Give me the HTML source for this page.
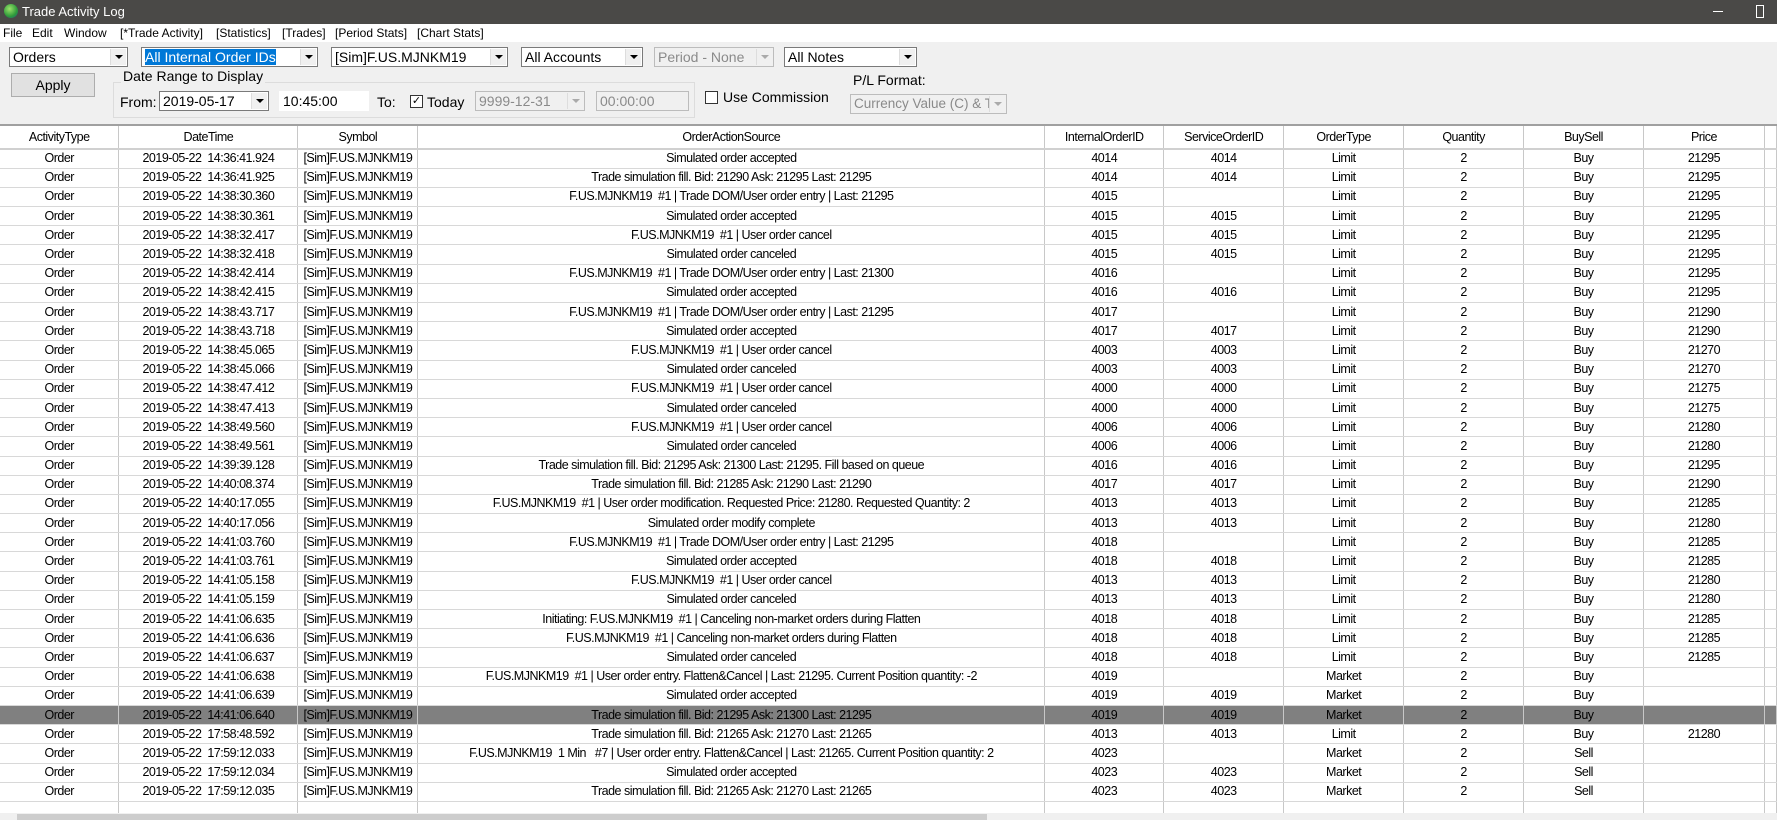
<!DOCTYPE html>
<html><head><meta charset="utf-8"><style>
*{box-sizing:border-box;margin:0;padding:0}
body{width:1777px;height:820px;overflow:hidden;background:#f0f0f0;font-family:"Liberation Sans",sans-serif;font-size:13px;color:#000;position:relative}
.a{position:absolute}
#title{left:0;top:0;width:1777px;height:24px;background:#4a4947;color:#fff;font-size:13px}
#menu{left:0;top:24px;width:1777px;height:18px;background:#fff;font-size:12px}
#menu span{position:absolute;top:2px}
.cb{position:absolute;height:20px;background:#fff;border:1px solid #7a7a7a;font-size:14px;line-height:18px;padding-left:3px;white-space:nowrap;overflow:hidden}
.cb .ar{position:absolute;right:1px;top:1px;width:16px;height:16px;background:#f0f0f0;border-left:1px solid #ddd}
.cb .ar:after{content:"";position:absolute;left:4px;top:6px;border-left:4px solid transparent;border-right:4px solid transparent;border-top:4px solid #000}
.cb.dis{background:#f0f0f0;border-color:#bcbcbc;color:#8a8a8a}
.cb.dis .ar:after{border-top-color:#aaa}
.lbl{position:absolute;font-size:14px}
.chk{position:absolute;width:13px;height:13px;border:1px solid #333;background:#fff;font-size:11px;line-height:11px;text-align:center}
#grid{left:0;top:124px;width:1777px;height:690px;background:#fff;border-top:2px solid #a0a0a0;overflow:hidden}
table{border-collapse:collapse;table-layout:fixed;font-family:"Liberation Sans",sans-serif;font-size:12.5px;letter-spacing:-0.5px}
td,th{border-right:1px solid #c8c8c8;border-bottom:1px solid #d8d8d8;text-align:center;white-space:nowrap;overflow:hidden;font-weight:normal;height:19.2px;line-height:17px;padding:0}
th{height:23px;border-bottom:2px solid #d0d0d0}
tr.sel td{background:#808080}
</style></head><body>
<div id="title" class="a">
<div class="a" style="left:4px;top:4px;width:14px;height:14px;border-radius:50%;background:radial-gradient(circle at 40% 35%,#9be36a,#2e9a3a 60%,#1a5e8a)"></div>
<span class="a" style="left:22px;top:4px">Trade Activity Log</span>
<div class="a" style="left:1713px;top:11px;width:10px;height:1px;background:#fff"></div>
<div class="a" style="left:1756px;top:5px;width:8px;height:13px;border:1px solid #fff"></div>
</div>
<div id="menu" class="a">
<span style="left:3px">File</span><span style="left:32px">Edit</span><span style="left:64px">Window</span><span style="left:120px">[*Trade Activity]</span><span style="left:216px">[Statistics]</span><span style="left:282px">[Trades]</span><span style="left:335px">[Period Stats]</span><span style="left:417px">[Chart Stats]</span>
</div>
<div class="cb" style="left:9px;top:47px;width:119px">Orders<div class="ar"></div></div>
<div class="cb" style="left:141px;top:47px;width:177px"><span style="background:#0078d7;color:#fff">All Internal Order IDs</span><div class="ar"></div></div>
<div class="cb" style="left:331px;top:47px;width:177px">[Sim]F.US.MJNKM19<div class="ar"></div></div>
<div class="cb" style="left:521px;top:47px;width:122px">All Accounts<div class="ar"></div></div>
<div class="cb dis" style="left:654px;top:47px;width:120px">Period - None<div class="ar"></div></div>
<div class="cb" style="left:784px;top:47px;width:133px">All Notes<div class="ar"></div></div>
<div class="a" style="left:11px;top:73px;width:84px;height:24px;border:1px solid #adadad;background:#e1e1e1;text-align:center;line-height:22px;font-size:14px">Apply</div>
<div class="a" style="left:113px;top:82px;width:582px;height:36px;border:1px solid #dcdcdc"></div>
<span class="lbl" style="left:121px;top:68px;background:#f0f0f0;padding:0 2px">Date Range to Display</span>
<span class="lbl" style="left:120px;top:94px">From:</span>
<div class="cb" style="left:159px;top:91px;width:110px">2019-05-17<div class="ar"></div></div>
<div class="cb" style="left:279px;top:91px;width:90px;border-color:#fff">10:45:00</div>
<span class="lbl" style="left:377px;top:94px">To:</span>
<div class="chk" style="left:410px;top:95px">✓</div>
<span class="lbl" style="left:427px;top:94px">Today</span>
<div class="cb dis" style="left:475px;top:91px;width:110px">9999-12-31<div class="ar"></div></div>
<div class="cb dis" style="left:596px;top:91px;width:93px">00:00:00</div>
<div class="chk" style="left:705px;top:91px"></div>
<span class="lbl" style="left:723px;top:89px">Use Commission</span>
<span class="lbl" style="left:853px;top:72px">P/L Format:</span>
<div class="cb dis" style="left:850px;top:94px;width:157px;font-size:13.5px">Currency Value (C) &amp; T<div class="ar"></div></div>
<div id="grid" class="a">
<table>
<colgroup><col style="width:119px"><col style="width:179px"><col style="width:120px"><col style="width:627px"><col style="width:119px"><col style="width:120px"><col style="width:120px"><col style="width:120px"><col style="width:120px"><col style="width:121px"><col style="width:12px"></colgroup>
<tr><th>ActivityType</th><th>DateTime</th><th>Symbol</th><th>OrderActionSource</th><th>InternalOrderID</th><th>ServiceOrderID</th><th>OrderType</th><th>Quantity</th><th>BuySell</th><th>Price</th><th></th></tr>
<tr><td>Order</td><td>2019-05-22&nbsp; 14:36:41.924</td><td>[Sim]F.US.MJNKM19</td><td>Simulated order accepted</td><td>4014</td><td>4014</td><td>Limit</td><td>2</td><td>Buy</td><td>21295</td><td></td></tr>
<tr><td>Order</td><td>2019-05-22&nbsp; 14:36:41.925</td><td>[Sim]F.US.MJNKM19</td><td>Trade simulation fill. Bid: 21290 Ask: 21295 Last: 21295</td><td>4014</td><td>4014</td><td>Limit</td><td>2</td><td>Buy</td><td>21295</td><td></td></tr>
<tr><td>Order</td><td>2019-05-22&nbsp; 14:38:30.360</td><td>[Sim]F.US.MJNKM19</td><td>F.US.MJNKM19&nbsp; #1 | Trade DOM/User order entry | Last: 21295</td><td>4015</td><td></td><td>Limit</td><td>2</td><td>Buy</td><td>21295</td><td></td></tr>
<tr><td>Order</td><td>2019-05-22&nbsp; 14:38:30.361</td><td>[Sim]F.US.MJNKM19</td><td>Simulated order accepted</td><td>4015</td><td>4015</td><td>Limit</td><td>2</td><td>Buy</td><td>21295</td><td></td></tr>
<tr><td>Order</td><td>2019-05-22&nbsp; 14:38:32.417</td><td>[Sim]F.US.MJNKM19</td><td>F.US.MJNKM19&nbsp; #1 | User order cancel</td><td>4015</td><td>4015</td><td>Limit</td><td>2</td><td>Buy</td><td>21295</td><td></td></tr>
<tr><td>Order</td><td>2019-05-22&nbsp; 14:38:32.418</td><td>[Sim]F.US.MJNKM19</td><td>Simulated order canceled</td><td>4015</td><td>4015</td><td>Limit</td><td>2</td><td>Buy</td><td>21295</td><td></td></tr>
<tr><td>Order</td><td>2019-05-22&nbsp; 14:38:42.414</td><td>[Sim]F.US.MJNKM19</td><td>F.US.MJNKM19&nbsp; #1 | Trade DOM/User order entry | Last: 21300</td><td>4016</td><td></td><td>Limit</td><td>2</td><td>Buy</td><td>21295</td><td></td></tr>
<tr><td>Order</td><td>2019-05-22&nbsp; 14:38:42.415</td><td>[Sim]F.US.MJNKM19</td><td>Simulated order accepted</td><td>4016</td><td>4016</td><td>Limit</td><td>2</td><td>Buy</td><td>21295</td><td></td></tr>
<tr><td>Order</td><td>2019-05-22&nbsp; 14:38:43.717</td><td>[Sim]F.US.MJNKM19</td><td>F.US.MJNKM19&nbsp; #1 | Trade DOM/User order entry | Last: 21295</td><td>4017</td><td></td><td>Limit</td><td>2</td><td>Buy</td><td>21290</td><td></td></tr>
<tr><td>Order</td><td>2019-05-22&nbsp; 14:38:43.718</td><td>[Sim]F.US.MJNKM19</td><td>Simulated order accepted</td><td>4017</td><td>4017</td><td>Limit</td><td>2</td><td>Buy</td><td>21290</td><td></td></tr>
<tr><td>Order</td><td>2019-05-22&nbsp; 14:38:45.065</td><td>[Sim]F.US.MJNKM19</td><td>F.US.MJNKM19&nbsp; #1 | User order cancel</td><td>4003</td><td>4003</td><td>Limit</td><td>2</td><td>Buy</td><td>21270</td><td></td></tr>
<tr><td>Order</td><td>2019-05-22&nbsp; 14:38:45.066</td><td>[Sim]F.US.MJNKM19</td><td>Simulated order canceled</td><td>4003</td><td>4003</td><td>Limit</td><td>2</td><td>Buy</td><td>21270</td><td></td></tr>
<tr><td>Order</td><td>2019-05-22&nbsp; 14:38:47.412</td><td>[Sim]F.US.MJNKM19</td><td>F.US.MJNKM19&nbsp; #1 | User order cancel</td><td>4000</td><td>4000</td><td>Limit</td><td>2</td><td>Buy</td><td>21275</td><td></td></tr>
<tr><td>Order</td><td>2019-05-22&nbsp; 14:38:47.413</td><td>[Sim]F.US.MJNKM19</td><td>Simulated order canceled</td><td>4000</td><td>4000</td><td>Limit</td><td>2</td><td>Buy</td><td>21275</td><td></td></tr>
<tr><td>Order</td><td>2019-05-22&nbsp; 14:38:49.560</td><td>[Sim]F.US.MJNKM19</td><td>F.US.MJNKM19&nbsp; #1 | User order cancel</td><td>4006</td><td>4006</td><td>Limit</td><td>2</td><td>Buy</td><td>21280</td><td></td></tr>
<tr><td>Order</td><td>2019-05-22&nbsp; 14:38:49.561</td><td>[Sim]F.US.MJNKM19</td><td>Simulated order canceled</td><td>4006</td><td>4006</td><td>Limit</td><td>2</td><td>Buy</td><td>21280</td><td></td></tr>
<tr><td>Order</td><td>2019-05-22&nbsp; 14:39:39.128</td><td>[Sim]F.US.MJNKM19</td><td>Trade simulation fill. Bid: 21295 Ask: 21300 Last: 21295. Fill based on queue</td><td>4016</td><td>4016</td><td>Limit</td><td>2</td><td>Buy</td><td>21295</td><td></td></tr>
<tr><td>Order</td><td>2019-05-22&nbsp; 14:40:08.374</td><td>[Sim]F.US.MJNKM19</td><td>Trade simulation fill. Bid: 21285 Ask: 21290 Last: 21290</td><td>4017</td><td>4017</td><td>Limit</td><td>2</td><td>Buy</td><td>21290</td><td></td></tr>
<tr><td>Order</td><td>2019-05-22&nbsp; 14:40:17.055</td><td>[Sim]F.US.MJNKM19</td><td>F.US.MJNKM19&nbsp; #1 | User order modification. Requested Price: 21280. Requested Quantity: 2</td><td>4013</td><td>4013</td><td>Limit</td><td>2</td><td>Buy</td><td>21285</td><td></td></tr>
<tr><td>Order</td><td>2019-05-22&nbsp; 14:40:17.056</td><td>[Sim]F.US.MJNKM19</td><td>Simulated order modify complete</td><td>4013</td><td>4013</td><td>Limit</td><td>2</td><td>Buy</td><td>21280</td><td></td></tr>
<tr><td>Order</td><td>2019-05-22&nbsp; 14:41:03.760</td><td>[Sim]F.US.MJNKM19</td><td>F.US.MJNKM19&nbsp; #1 | Trade DOM/User order entry | Last: 21295</td><td>4018</td><td></td><td>Limit</td><td>2</td><td>Buy</td><td>21285</td><td></td></tr>
<tr><td>Order</td><td>2019-05-22&nbsp; 14:41:03.761</td><td>[Sim]F.US.MJNKM19</td><td>Simulated order accepted</td><td>4018</td><td>4018</td><td>Limit</td><td>2</td><td>Buy</td><td>21285</td><td></td></tr>
<tr><td>Order</td><td>2019-05-22&nbsp; 14:41:05.158</td><td>[Sim]F.US.MJNKM19</td><td>F.US.MJNKM19&nbsp; #1 | User order cancel</td><td>4013</td><td>4013</td><td>Limit</td><td>2</td><td>Buy</td><td>21280</td><td></td></tr>
<tr><td>Order</td><td>2019-05-22&nbsp; 14:41:05.159</td><td>[Sim]F.US.MJNKM19</td><td>Simulated order canceled</td><td>4013</td><td>4013</td><td>Limit</td><td>2</td><td>Buy</td><td>21280</td><td></td></tr>
<tr><td>Order</td><td>2019-05-22&nbsp; 14:41:06.635</td><td>[Sim]F.US.MJNKM19</td><td>Initiating: F.US.MJNKM19&nbsp; #1 | Canceling non-market orders during Flatten</td><td>4018</td><td>4018</td><td>Limit</td><td>2</td><td>Buy</td><td>21285</td><td></td></tr>
<tr><td>Order</td><td>2019-05-22&nbsp; 14:41:06.636</td><td>[Sim]F.US.MJNKM19</td><td>F.US.MJNKM19&nbsp; #1 | Canceling non-market orders during Flatten</td><td>4018</td><td>4018</td><td>Limit</td><td>2</td><td>Buy</td><td>21285</td><td></td></tr>
<tr><td>Order</td><td>2019-05-22&nbsp; 14:41:06.637</td><td>[Sim]F.US.MJNKM19</td><td>Simulated order canceled</td><td>4018</td><td>4018</td><td>Limit</td><td>2</td><td>Buy</td><td>21285</td><td></td></tr>
<tr><td>Order</td><td>2019-05-22&nbsp; 14:41:06.638</td><td>[Sim]F.US.MJNKM19</td><td>F.US.MJNKM19&nbsp; #1 | User order entry. Flatten&amp;Cancel | Last: 21295. Current Position quantity: -2</td><td>4019</td><td></td><td>Market</td><td>2</td><td>Buy</td><td></td><td></td></tr>
<tr><td>Order</td><td>2019-05-22&nbsp; 14:41:06.639</td><td>[Sim]F.US.MJNKM19</td><td>Simulated order accepted</td><td>4019</td><td>4019</td><td>Market</td><td>2</td><td>Buy</td><td></td><td></td></tr>
<tr class="sel"><td>Order</td><td>2019-05-22&nbsp; 14:41:06.640</td><td>[Sim]F.US.MJNKM19</td><td>Trade simulation fill. Bid: 21295 Ask: 21300 Last: 21295</td><td>4019</td><td>4019</td><td>Market</td><td>2</td><td>Buy</td><td></td><td></td></tr>
<tr><td>Order</td><td>2019-05-22&nbsp; 17:58:48.592</td><td>[Sim]F.US.MJNKM19</td><td>Trade simulation fill. Bid: 21265 Ask: 21270 Last: 21265</td><td>4013</td><td>4013</td><td>Limit</td><td>2</td><td>Buy</td><td>21280</td><td></td></tr>
<tr><td>Order</td><td>2019-05-22&nbsp; 17:59:12.033</td><td>[Sim]F.US.MJNKM19</td><td>F.US.MJNKM19&nbsp; 1 Min&nbsp;&nbsp; #7 | User order entry. Flatten&amp;Cancel | Last: 21265. Current Position quantity: 2</td><td>4023</td><td></td><td>Market</td><td>2</td><td>Sell</td><td></td><td></td></tr>
<tr><td>Order</td><td>2019-05-22&nbsp; 17:59:12.034</td><td>[Sim]F.US.MJNKM19</td><td>Simulated order accepted</td><td>4023</td><td>4023</td><td>Market</td><td>2</td><td>Sell</td><td></td><td></td></tr>
<tr><td>Order</td><td>2019-05-22&nbsp; 17:59:12.035</td><td>[Sim]F.US.MJNKM19</td><td>Trade simulation fill. Bid: 21265 Ask: 21270 Last: 21265</td><td>4023</td><td>4023</td><td>Market</td><td>2</td><td>Sell</td><td></td><td></td></tr>
<tr><td style="height:30px;border-bottom:none"></td><td style="border-bottom:none"></td><td style="border-bottom:none"></td><td style="border-bottom:none"></td><td style="border-bottom:none"></td><td style="border-bottom:none"></td><td style="border-bottom:none"></td><td style="border-bottom:none"></td><td style="border-bottom:none"></td><td style="border-bottom:none"></td><td style="border-bottom:none"></td></tr>
</table>
</div>
<div class="a" style="left:0;top:813px;width:1777px;height:7px;background:#f0f0f0"></div>
<div class="a" style="left:17px;top:814px;width:970px;height:6px;background:#cdcdcd"></div>
</body></html>
